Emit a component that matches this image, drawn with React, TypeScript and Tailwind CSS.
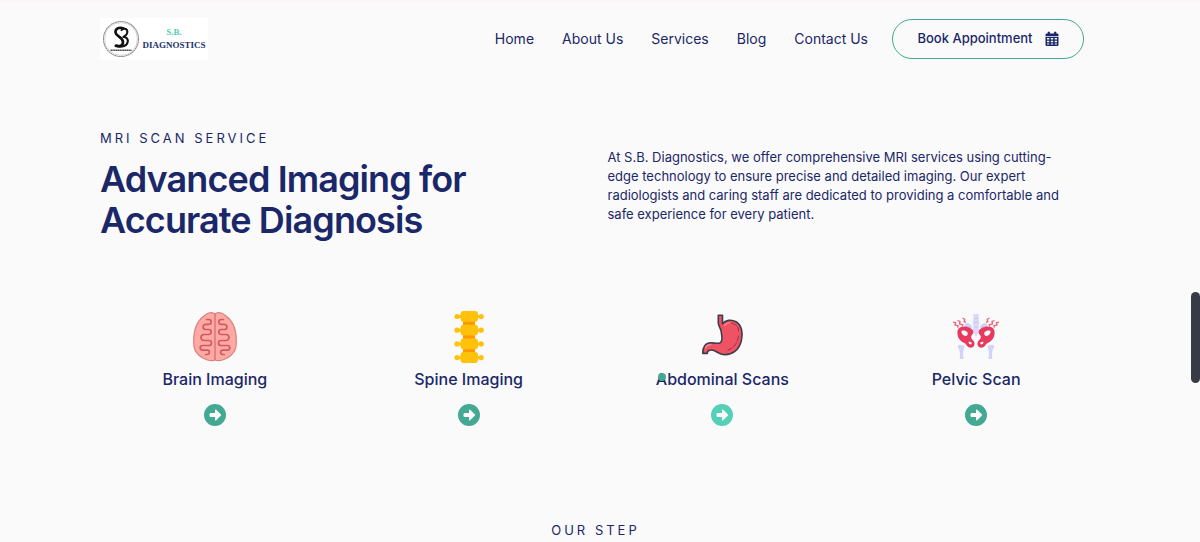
import React from "react";
import { FaCircleRight } from "react-icons/fa6";

const links = ["Home", "About Us", "Services", "Blog", "Contact Us"];

function Logo() {
  return (
    <a href="#home" aria-label="S.B. Diagnostics" className="flex h-[42px] w-[108px] items-center bg-white pl-0.5">
      <svg viewBox="0 0 38 38" className="size-[38px] shrink-0" aria-hidden="true">
        <circle cx="19" cy="19" r="17.5" fill="none" stroke="#8f8f8f" strokeWidth="1.1" strokeDasharray="2 .3" />
        <circle cx="19" cy="19" r="16.4" fill="none" stroke="#bdbdbd" strokeWidth=".6" />
        <path d="M21.500 8.500c-4.500-2-8.500.5-8 4 .5 4 7.500 4.500 7.500 9.500 0 3.500-3.500 5-7 3.500" fill="none" stroke="#111" strokeWidth="2.600" strokeLinecap="round" />
        <path d="M19.500 10c3-2.500 6.300-1 5.800 2.300-.4 2.500-2.500 4-4.600 4.600 3.800-.2 5.600 2 5 5.100-.7 3.600-5.200 5.800-12.200 4" fill="none" stroke="#111" strokeWidth="2" strokeLinecap="round" />
        <path d="M8.500 30.200h21" stroke="#444" strokeWidth="1.600" strokeDasharray="1.400 .4" />
      </svg>
      <span className="flex flex-1 flex-col items-center font-['Liberation_Serif',serif] text-[9px] leading-[13px] font-bold">
        <span className="text-[#58cfb5]">S.B.</span>
        <span className="text-[#22306f]">DIAGNOSTICS</span>
      </span>
    </a>
  );
}

function CalendarIcon() {
  return (
    <svg viewBox="0 0 14 16" className="h-4 w-3.5" aria-hidden="true">
      <path d="M3 1h1.600v3H3zM9.400 1H11v3H9.400z" fill="#1a2769" stroke="#1a2769" strokeWidth=".6" strokeLinejoin="round" />
      <path d="M1.800 2.500h10.400A1.300 1.300 0 0 1 13.500 3.800V5.200H.5V3.800A1.300 1.300 0 0 1 1.800 2.500z" fill="#1a2769" />
      <path d="M.5 6h13v7.700a1.300 1.300 0 0 1-1.300 1.300H1.800A1.300 1.300 0 0 1 .5 13.700z" fill="#1a2769" />
      <path d="M2 7h2.300v1.600H2zM5.850 7h2.300v1.600h-2.300zM9.700 7H12v1.600H9.700zM2 9.700h2.300v1.600H2zM5.850 9.700h2.300v1.600h-2.300zM9.700 9.700H12v1.600H9.700zM2 12.400h2.300v1.200H2zM5.850 12.400h2.300v1.200h-2.300zM9.700 12.400H12v1.200H9.700z" fill="#fafafa" />
    </svg>
  );
}

function BrainIcon() {
  const fold =
    "M17.500 8.500h2.200a2.400 2.400 0 0 1 0 4.800h-3a2.600 2.600 0 0 0 0 5.200h3a2.500 2.500 0 0 1 0 5H15a3 3 0 0 0 0 6h5a2.500 2.500 0 0 1 0 5h-6.500a2.300 2.300 0 0 0 0 4.600h4.700a2.200 2.200 0 0 1 0 4.400h-1.500";
  return (
    <svg viewBox="0 0 52 52" className="size-[52px]" fill="none" aria-hidden="true">
      <path d="M26 3C22 .5 18 2 15 5 8 10 4.700 20 4.700 30c0 6 .5 10 5 14 4 4 12 7 16.300 5 4.300 2 12.300-1 16.300-5 4.500-4 5-8 5-14C47.300 20 44 10 37 5c-3-3-7-4.500-11-2z" fill="#ffa9a5" stroke="#dd8080" strokeWidth="1.200" />
      <path d="M26 3v46" stroke="#d66f70" strokeWidth="1.300" />
      <g stroke="#cf5b60" strokeWidth="1.700" strokeLinecap="round">
        <path d={fold} />
        <path d={fold} transform="matrix(-1 0 0 1 52 0)" />
      </g>
    </svg>
  );
}

function SpineIcon() {
  return (
    <svg viewBox="0 0 52 52" className="size-[52px]" aria-hidden="true">
      <path d="M20 8h12v36H20z" fill="#ff9800" />
      {[0, 13.700, 27.400, 41.100].map((y) => (
        <g key={y} transform={`translate(0 ${y})`} fill="#ffc10a">
          <rect x="17.500" y="0" width="17.500" height="10.800" rx="3" />
          <path d="M13 4h26v3H13z" />
          <circle cx="14" cy="5.500" r="2.600" />
          <circle cx="38.200" cy="5.500" r="2.600" />
        </g>
      ))}
    </svg>
  );
}

function StomachIcon() {
  return (
    <svg viewBox="0 0 52 52" className="size-[52px]" fill="none" strokeLinecap="round" strokeLinejoin="round" aria-hidden="true">
      <path d="M22.300 4.300h4.200v8.400c3-3.800 9-4.500 13.500-1.900 5.500 3.200 7.200 10.500 5.500 18C43.500 39 36 44.500 27 43.500c-5-.6-7.500-4.500-11.500-4.500-3 0-4.200 1.200-4.200 3.400H6.800c-.3-6.500 2.700-10.500 8.200-10.600 3.500 0 6.500 1.400 9.300-.1C27.500 29.500 25.500 25 25.300 21c-.1-3.500-3-5.500-3-9z" fill="#ef5262" stroke="#3b3e4d" strokeWidth="1.600" />
      <path d="M36 12.500c4 .3 6.500 3.500 6.600 7.500M42.500 25c-1 7-4.500 12-10.500 14" stroke="#9c3247" strokeWidth="1" strokeDasharray="5 2" />
      <path d="M9.500 37c1-3 3.500-3.500 5.500-3.300M28.500 14.500c2-2 3-2.500 5-2.800" stroke="#ff8b94" strokeWidth="1.200" />
    </svg>
  );
}

function PelvisIcon() {
  const half = (
    <>
      <path d="M15 13c2.500-2.500 6 .5 7.500 3.500L19 18c-3 0-5.500-3-4-5z" fill="#d0d0f6" />
      <path fillRule="evenodd" d="M23.200 20c-1.500-4.500-14-7-15.600-.500-1 5 1.600 10.700 6.400 12.200 2.500.8 2.400 4 5.700 4.800 3.500.8 5.600-2.300 4.500-5.600-.7-2-3.300-2.800-3-5.200.3-2.200 2.900-2.900 2-5.700zM11.800 19.700c2.400-1 6.200.6 6 3-.3 2.400-2.600 3-4.300 1.600-1.500-1.200-2.800-3.700-1.700-4.600zM18.500 31c1.600-.9 3.600.3 3.200 1.700-.6 1.300-3.300.6-3.200-1.700z" fill="#e63a5e" />
      <path d="M8 34.500c1.500-1.700 3 0 4.300-.2 1.300-.5 2.700.7 2 2.300-1.300 2.500-1.500 7-.8 11.400H9.800c.2-4 .4-7.500-.8-9.800-.7-1.300-1.600-2.700-1-3.700z" fill="#d3d3f7" />
      <path d="M3 11l2.600.8-.6 2.200 3 .7-.3 2M7.500 9.500l2.500 1-.5 2.500 3.200.7-.2 1.800M12.500 7l2.200 1.300-.5 2.200 1.800.8" fill="none" stroke="#e9607a" strokeWidth="1.300" />
    </>
  );
  return (
    <svg viewBox="0 0 52 52" className="size-[52px]" aria-hidden="true">
      <path d="M23.500 3.500h5l-.6 4 1 4-1 4.500 1 4-2.900 5-2.900-5 1-4-1-4.500 1-4z" fill="#dadaf9" stroke="#dadaf9" strokeWidth="1" />
      <path d="M24 7.500h4.400M24 11.600h4.400M24 16h4.400" stroke="#c0c0ee" strokeWidth=".8" />
      <g>{half}</g>
      <g transform="matrix(-1 0 0 1 52 0)">{half}</g>
    </svg>
  );
}

const services = [
  { name: "Brain Imaging", Icon: BrainIcon },
  { name: "Spine Imaging", Icon: SpineIcon },
  { name: "Abdominal Scans", Icon: StomachIcon, active: true },
  { name: "Pelvic Scan", Icon: PelvisIcon },
];

export default function App() {
  return (
    <div className="relative min-h-screen border-t-2 border-[#fdf5f7] bg-[#fafafa] pr-[109px] pl-[100px] font-[Inter,sans-serif] text-[#1a2769]">
      <header className="flex items-center justify-between pt-4 pr-[7px]">
        <Logo />
        <div className="flex items-center gap-6">
          <nav className="flex gap-7 text-sm">
            {links.map((l) => (
              <a key={l} href="#top">{l}</a>
            ))}
          </nav>
          <button type="button" className="flex h-10 w-[192px] items-center justify-center gap-3 rounded-full border border-[#43a993] text-[13px] font-medium">
            Book Appointment
            <CalendarIcon />
          </button>
        </div>
      </header>

      <main>
        <section className="grid grid-cols-2 gap-6 pt-[68px]">
          <div>
            <p className="text-[13px] leading-5 tracking-[3px]">MRI SCAN SERVICE</p>
            <h1 className="pt-[11px] text-4xl leading-[41px] font-semibold tracking-tight">
              Advanced Imaging for
              <br />
              Accurate Diagnosis
            </h1>
          </div>
          <p className="pt-5 text-[13px] leading-[19px]">
            At S.B. Diagnostics, we offer comprehensive MRI services using cutting-
            <br />
            edge technology to ensure precise and detailed imaging. Our expert
            <br />
            radiologists and caring staff are dedicated to providing a comfortable and
            <br />
            safe experience for every patient.
          </p>
        </section>

        <section className="grid grid-cols-4 gap-6 pt-[70px]">
          {services.map(({ name, Icon, active }) => (
            <article key={name} className="flex flex-col items-center">
              <Icon />
              <h2 className="relative pt-1 text-base leading-6 font-medium">
                {name}
                {active && <span className="absolute top-2.5 left-0.5 size-2 rounded-full bg-[#43a993]" />}
              </h2>
              <a href="#service" aria-label={`View ${name}`} className={active ? "pt-[13px] text-[#55d0b8]" : "pt-[13px] text-[#43a993]"}>
                <FaCircleRight className="size-[22px]" />
              </a>
            </article>
          ))}
        </section>

        <p className="pt-[94px] text-center text-[13px] leading-5 tracking-[3px]">OUR STEP</p>
      </main>

      <div className="absolute top-[290px] right-0 h-[91px] w-[9px] rounded-full bg-[#373b45]" />
    </div>
  );
}
